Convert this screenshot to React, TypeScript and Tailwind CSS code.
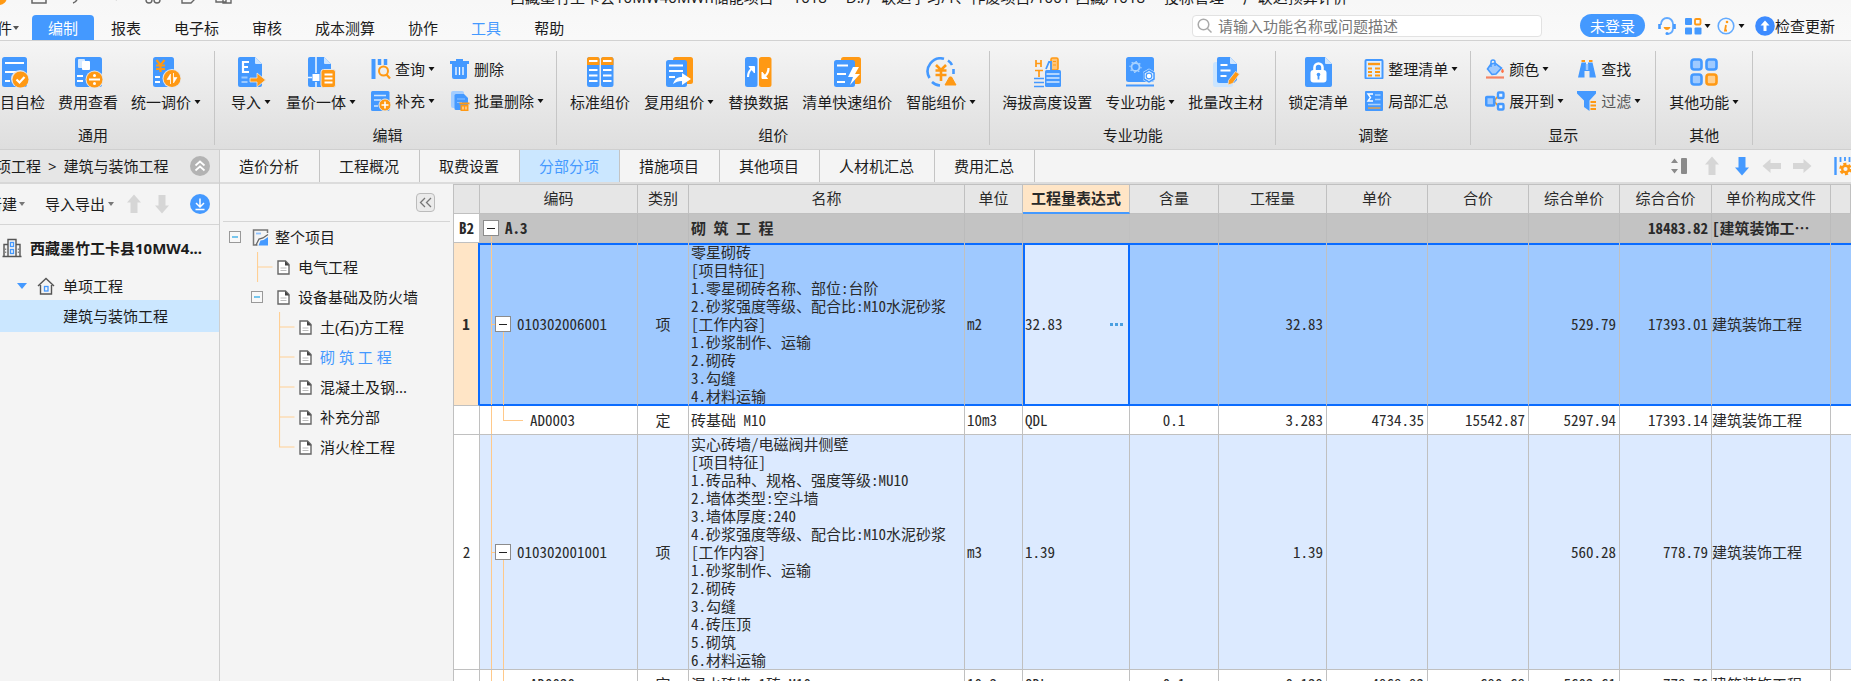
import type { ReactNode } from "react";

const BLUE = "#4499ff";
const ORANGE = "#ff9914";

function Svg({ w, h, children }: { w: number; h: number; children: ReactNode }) {
  return (
    <svg width={w} height={h} viewBox={`0 0 ${w} ${h}`} className="shrink-0" fill="none" aria-hidden="true">
      {children}
    </svg>
  );
}

function Caret() {
  return <Svg w={7} h={4}><path d="M0.5 0h6L3.5 4z" fill="#111" /></Svg>;
}

/* ---------- large ribbon icons, 30px high ---------- */

const CheckDoc = () => (
  <Svg w={28} h={31}>
    <rect x="1" y="0" width="25" height="30" rx="2.5" fill={BLUE} />
    <path d="M4 6h19M4 15h13M4 24h5" stroke="#fff" strokeWidth="2" />
    <circle cx="19" cy="22" r="9" fill="#e6e6e6" />
    <circle cx="19.500" cy="22.500" r="8" fill={ORANGE} />
    <path d="M15.500 22.500l3 3 5-5.500" stroke="#fff" strokeWidth="2.200" />
  </Svg>
);

const FeeDoc = () => (
  <Svg w={29} h={31}>
    <rect x="1" y="0" width="27" height="30" rx="2.500" fill={BLUE} />
    <rect x="4" y="2" width="7" height="9" rx="1" fill="#d5e9ff" />
    <rect x="8" y="4" width="8" height="9" rx="1" fill="#fff" />
    <path d="M3 19h6M3 24h6" stroke="#fff" strokeWidth="2.200" />
    <circle cx="20.500" cy="22.500" r="9" fill="#e6e6e6" />
    <circle cx="20.500" cy="22.500" r="8" fill={ORANGE} />
    <path d="M15 22.500h11" stroke="#fff" strokeWidth="2" />
    <circle cx="20.500" cy="18.500" r="1.500" fill="#fff" />
    <circle cx="20.500" cy="26.500" r="1.500" fill="#fff" />
  </Svg>
);

const YuanDoc = () => (
  <Svg w={29} h={31}>
    <rect x="1" y="0" width="21" height="30" rx="2.500" fill={BLUE} />
    <path d="M4.500 3l4 5 4-5M8.500 8v7M4 8.500h9M4 12h9" stroke={ORANGE} strokeWidth="2.200" />
    <path d="M3 20h5M3 25h5" stroke="#fff" strokeWidth="2" />
    <circle cx="20" cy="21.500" r="9.500" fill="#e6e6e6" />
    <circle cx="20" cy="21.500" r="8.500" fill={ORANGE} />
    <path d="M18.500 27V17l-3.500 5.500h3.500zM21.500 16v10l3.500-5.500h-3.500z" fill="#fff" stroke="#fff" strokeWidth=".6" />
  </Svg>
);

const ImportDoc = () => (
  <Svg w={29} h={31}>
    <path d="M3 0h15l7 7v21a2 2 0 0 1-2 2H3a2 2 0 0 1-2-2V2a2 2 0 0 1 2-2z" fill={BLUE} />
    <path d="M18 0l7 7h-6a1 1 0 0 1-1-1z" fill="#cfe6ff" />
    <path d="M12 5H6v10h6M6 10h5" stroke="#fff" strokeWidth="2.200" />
    <path d="M4.500 20.500h6M4.500 25h6" stroke="#9ccaff" strokeWidth="2" />
    <path d="M13 21h7v-5l8.500 7L20 30v-5h-7z" fill={ORANGE} stroke="#e6e6e6" strokeWidth=".8" />
  </Svg>
);

const PriceBody = () => (
  <Svg w={29} h={31}>
    <path d="M3 0h14l7 7v23H3a2 2 0 0 1-2-2V2a2 2 0 0 1 2-2z" fill={BLUE} />
    <path d="M17 0l7 7h-6a1 1 0 0 1-1-1z" fill="#cfe6ff" />
    <path d="M9 0v16M9 25v5M1 20.500h4" stroke="#e8f3ff" strokeWidth="1.600" />
    <rect x="5.500" y="17" width="7" height="7" fill="#fff" />
    <rect x="14" y="12.500" width="14.500" height="18" rx="2.500" fill={ORANGE} stroke="#e6e6e6" />
    <path d="M17.500 17.500h8M17.500 21.500h8M17.500 25.500h8" stroke="#fff" strokeWidth="1.800" />
  </Svg>
);

const StandardIcon = () => (
  <Svg w={28} h={31}>
    {[1, 15].map((x) => (
      <g key={x}>
        <rect x={x} y="0" width="12.500" height="30" rx="2.500" fill={BLUE} />
        <path d={`M${x} 8V2.500a2.500 2.500 0 0 1 2.500-2.500h7.500a2.500 2.500 0 0 1 2.500 2.500V8z`} fill={ORANGE} />
        <path d={`M${x + 2} 4h8.500M${x + 2} 13h8.500M${x + 2} 18.500h8.500M${x + 2} 24h8.500`} stroke="#fff" strokeWidth="2" />
      </g>
    ))}
  </Svg>
);

const ReuseIcon = () => (
  <Svg w={29} h={31}>
    <rect x="8" y="0" width="20" height="27" rx="2.500" fill={ORANGE} />
    <rect x="1" y="3" width="21" height="27" rx="2.500" fill={BLUE} />
    <path d="M4 8.500h14M4 14h14M4 20h6" stroke="#fff" strokeWidth="2" />
    <path d="M8 27c2-6 5-7 9-7v-4l9 6-9 6v-4c-4 0-6 1-9 3z" fill="#fff" />
  </Svg>
);

const ReplaceIcon = () => (
  <Svg w={28} h={31}>
    <rect x="1" y="0" width="12.500" height="30" rx="2.500" fill={BLUE} />
    <rect x="15" y="0" width="12.500" height="30" rx="2.500" fill={ORANGE} />
    <path d="M4 20c0-4 1-6 3.500-8" stroke="#fff" strokeWidth="2.200" />
    <path d="M5 9.500h5.500V16z" fill="#fff" stroke="#fff" />
    <path d="M24.500 11c0 4-1 6-3.500 8" stroke="#fff" strokeWidth="2.200" />
    <path d="M23.500 21.500H18V15z" fill="#fff" stroke="#fff" />
  </Svg>
);

const QuickIcon = () => (
  <Svg w={29} h={31}>
    <rect x="8" y="0" width="20" height="27" rx="2.500" fill={ORANGE} />
    <rect x="1" y="3" width="21" height="27" rx="2.500" fill={BLUE} />
    <path d="M4 8.500h11M4 17h9M4 25h8" stroke="#fff" strokeWidth="2" />
    <path d="M20 10l-5 10h5l-3 8 10-11h-5l4-7z" fill="#fff" />
  </Svg>
);

const SmartIcon = () => (
  <Svg w={31} h={31}>
    <path d="M18 1.800A13 13 0 0 0 3.500 21M6 25A13 13 0 0 0 14 28.500" stroke={BLUE} strokeWidth="2.600" />
    <path d="M22 3.500A13 13 0 0 1 26 8M27.500 12v5" stroke={BLUE} strokeWidth="2.600" />
    <path d="M10 8l5 5 5-5M15 13v11M9.500 13.500h11M9.500 18h11" stroke={ORANGE} strokeWidth="2.600" />
    <path d="M19 28l4.500-8h2l4.500 8z" fill={ORANGE} stroke={ORANGE} strokeLinejoin="round" />
  </Svg>
);

const AltitudeIcon = () => (
  <Svg w={29} h={31}>
    <path d="M3 3v7M8 3v7M3 6.500h5M2 13.500h8M6 13.500V20" stroke={ORANGE} strokeWidth="1.700" />
    <rect x="18" y="1" width="7" height="12" rx="1.500" fill="#ffc478" stroke={ORANGE} strokeWidth="1.600" />
    <path d="M20 4.500h3M20 8h3" stroke={ORANGE} strokeWidth="1.200" />
    <path d="M13 12l3-7h2v8" stroke={BLUE} strokeWidth="1.800" />
    <rect x="12" y="13" width="16" height="17" rx="1.500" fill={BLUE} />
    <path d="M13.500 17h13M13.500 21h13M13.500 25h13" stroke="#d5e9ff" strokeWidth="1.400" />
    <path d="M1 21.500h10M1 25.500h10M1 29.500h10" stroke={BLUE} strokeWidth="1.600" />
  </Svg>
);

const ProIcon = () => (
  <Svg w={30} h={31}>
    <rect x="1" y="0" width="28" height="25" rx="2.500" fill={BLUE} />
    <circle cx="10.500" cy="10" r="4" stroke="#a8d2ff" strokeWidth="1.800" />
    <circle cx="10.500" cy="10" r="5.500" stroke="#a8d2ff" strokeWidth="1.200" strokeDasharray="1.500 2.700" />
    <path d="M24 11.500l6 3.500v8l-6 3.500-6-3.500v-8z" fill="#cfe6ff" />
    <path d="M24 13l5 3v6l-5 3-5-3v-6z" fill="#eaf4ff" stroke={BLUE} strokeWidth="1.500" />
    <circle cx="24" cy="19" r="2.800" fill="#fff" stroke={BLUE} strokeWidth="1.200" />
    <path d="M1 28.500h28" stroke={BLUE} strokeWidth="2" />
  </Svg>
);

const EditMaterialIcon = () => (
  <Svg w={28} h={31}>
    <rect x="1" y="5" width="20" height="25" rx="2.500" fill="#cbe5ff" />
    <path d="M7 0h11l7 7v16l-3 3H7a2 2 0 0 1-2-2V2a2 2 0 0 1 2-2z" fill={BLUE} />
    <path d="M18 0l7 7h-6a1 1 0 0 1-1-1z" fill="#cfe6ff" />
    <path d="M8.500 8h7M8.500 13.500h10M8.500 19h6" stroke="#fff" strokeWidth="2" />
    <path d="M23.500 14.500l4 2.500-7 9.500-4.500 1.500.5-4.500z" fill={ORANGE} stroke="#e6e6e6" strokeWidth=".8" />
  </Svg>
);

const LockIcon = () => (
  <Svg w={29} h={31}>
    <path d="M3 0h18l7 7v21a2 2 0 0 1-2 2H3a2 2 0 0 1-2-2V2a2 2 0 0 1 2-2z" fill={BLUE} />
    <path d="M21 0l7 7h-6a1 1 0 0 1-1-1z" fill="#cfe6ff" />
    <path d="M10.500 14v-3.500a4 4 0 0 1 8 0V14" stroke="#fff" strokeWidth="2.600" />
    <rect x="6.500" y="13" width="16" height="12.500" rx="3" fill="#fff" />
    <path d="M14.500 18v4.500" stroke={BLUE} strokeWidth="1.800" />
    <circle cx="14.500" cy="17.500" r="1.800" fill={BLUE} />
  </Svg>
);

const OtherIcon = () => (
  <Svg w={30} h={31}>
    {[[2, 2, BLUE, "#9fcaff"], [17, 2, BLUE, "#9fcaff"], [2, 17, BLUE, "#9fcaff"], [17, 17, ORANGE, "#ffcf8f"]].map(([x, y, c, f]) => (
      <rect key={`${x}-${y}`} x={+x + 0.5} y={+y + 0.5} width="10" height="10" rx="2.500" fill={String(f)} stroke={String(c)} strokeWidth="2.600" />
    ))}
  </Svg>
);

/* ---------- small ribbon icons, 20px ---------- */

const QueryIcon = () => (
  <Svg w={20} h={20}>
    <path d="M2.500 0v20" stroke={BLUE} strokeWidth="4" />
    <path d="M8.500 0v6M14.500 0v6" stroke={BLUE} strokeWidth="3.500" />
    <circle cx="12.500" cy="12" r="4.500" stroke={ORANGE} strokeWidth="2" />
    <path d="M15.500 15.500l3.500 4" stroke={ORANGE} strokeWidth="2.200" />
  </Svg>
);

const SupplementIcon = () => (
  <Svg w={20} h={20}>
    <rect x="0" y="0" width="18.500" height="20" rx="1.500" fill={BLUE} />
    <path d="M3 4.500h12M3 9h7M3 15h4" stroke="#cfe6ff" strokeWidth="1.500" />
    <circle cx="14" cy="14" r="6" fill={ORANGE} stroke="#e6e6e6" />
    <path d="M10.500 14h7M14 10.500v7" stroke="#fff" strokeWidth="1.600" />
  </Svg>
);

const TrashIcon = () => (
  <Svg w={20} h={20}>
    <path d="M6 0h7v2h6v3H0V2h6zM2 5h15v13a2 2 0 0 1-2 2H4a2 2 0 0 1-2-2z" fill={BLUE} />
    <path d="M6 8v8M9.500 8v8M13 8v8" stroke="#fff" strokeWidth="1.300" />
  </Svg>
);

const BatchTrashIcon = () => (
  <Svg w={20} h={20}>
    <rect x="1" y="0" width="13" height="17" rx="2" fill="#a3cdff" />
    <path d="M6 3h8l4 4v12H6a1.500 1.500 0 0 1-1.500-1.500v-13A1.500 1.500 0 0 1 6 3z" fill={BLUE} />
    <path d="M7 8h8M7 11.500h5" stroke="#8ec2ff" strokeWidth="1.200" />
    <path d="M9.500 11.500h10v2h-10zM10.500 14h8v6h-8z" fill={ORANGE} />
    <path d="M13 15.500v3M16 15.500v3" stroke="#ffe2ba" strokeWidth="1.200" />
  </Svg>
);

const ArrangeIcon = () => (
  <Svg w={20} h={20}>
    <rect x="1.500" y="1" width="17" height="18.500" rx="1" fill="#e1f0ff" stroke={BLUE} strokeWidth="2" />
    <path d="M4 5h12" stroke={ORANGE} strokeWidth="2.400" />
    <path d="M4 9.500h4M4 13h4M4 16.500h4M11 9.500h5M11 13h5M11 16.500h5" stroke={ORANGE} strokeWidth="1.800" />
  </Svg>
);

const PartialIcon = () => (
  <Svg w={20} h={20}>
    <rect x="1" y="0" width="18" height="20" rx="1" fill={BLUE} />
    <path d="M9 3H4l2.500 3.500L4 10h5" stroke="#fff" strokeWidth="1.400" />
    <path d="M11 4h5.500M11 8.500h5.500M4 13.500h12.500" stroke="#a8d2ff" strokeWidth="1.600" />
    <path d="M4 17h12.500" stroke="#d8a25c" strokeWidth="1.600" />
  </Svg>
);

const PaintIcon = () => (
  <Svg w={20} h={20}>
    <path d="M6 5l4-1 6.500 5-5.500 6-4 .5L2.500 10z" fill="#9fcaff" stroke={BLUE} strokeWidth="1.600" />
    <path d="M6 8V3a2 2 0 0 1 4 0v4" stroke={BLUE} strokeWidth="1.500" />
    <path d="M17.500 10c1 1.800 1.300 3.500 0 3.500s-1-1.700 0-3.500z" fill="#ff7043" stroke="#ff7043" />
    <path d="M1 18.500h18" stroke="#f58464" strokeWidth="2.200" />
  </Svg>
);

const ExpandIcon = () => (
  <Svg w={20} h={20}>
    <path d="M9 10l5-6M9 10l5 6" stroke={ORANGE} strokeWidth="1.500" />
    <rect x="1.200" y="6" width="8" height="8.500" rx="1" fill="#9fcaff" stroke={BLUE} strokeWidth="2.600" />
    <rect x="13" y="1.500" width="5.500" height="5.500" rx="1" fill="#e9f4ff" stroke={BLUE} strokeWidth="2.400" />
    <rect x="13" y="13" width="5.500" height="5.500" rx="1" fill="#e9f4ff" stroke={BLUE} strokeWidth="2.400" />
  </Svg>
);

const FindIcon = () => (
  <Svg w={20} h={20}>
    <path d="M4.500 2h3.500M12 2h3.500" stroke={ORANGE} strokeWidth="2" />
    <path d="M4.500 3.500H9V5h2V3.500h4.500L19 18.500h-6.500V12h-5v6.500H1z" fill={BLUE} />
    <path d="M10 5v6" stroke="#9fcaff" strokeWidth="2.500" />
  </Svg>
);

const FilterIcon = () => (
  <Svg w={20} h={20}>
    <path d="M0 0h19v2.500l-6.500 7V20L7 16V9.500L0 2.500z" fill={BLUE} />
    <path d="M13.500 11h5.500M13.500 14.500h5.500M13.500 18h5.500" stroke={ORANGE} strokeWidth="1.800" />
  </Svg>
);

/* ---------- ribbon ---------- */

interface Tool {
  label: string;
  icon: ReactNode;
  caret?: boolean;
  muted?: boolean;
}

function BigTool({ label, icon, caret }: Tool) {
  return (
    <button type="button" className="flex flex-col items-center gap-1 whitespace-nowrap">
      {icon}
      <span className="flex items-center gap-[3px] leading-5">{label}{caret && <Caret />}</span>
    </button>
  );
}

function SmallTools({ tools }: { tools: Tool[] }) {
  return (
    <div className="flex flex-col gap-3 pt-0.5">
      {tools.map((t) => (
        <button key={t.label} type="button" className="flex items-center gap-1 whitespace-nowrap leading-5">
          {t.icon}
          <span className={`flex items-center gap-[3px] ${t.muted ? "text-[#555]" : ""}`}>{t.label}{t.caret && <Caret />}</span>
        </button>
      ))}
    </div>
  );
}

function Group({ title, pad = "px-[13px]", gap = "gap-[13px]", children }: { title: string; pad?: string; gap?: string; children: ReactNode }) {
  return (
    <section aria-label={title} className={`flex shrink-0 flex-col items-center justify-between border-r border-[#c6c6c6] ${pad}`}>
      <div className={`flex items-start pt-1.5 ${gap}`}>{children}</div>
      <span className="leading-5">{title}</span>
    </section>
  );
}

function Ribbon() {
  return (
    <div className="flex border-b border-[#cfcfcf] bg-linear-to-b from-[#f5f5f5] to-[#dedede] py-1">
      <div className="-ml-7 flex h-[100px] pt-1.5">
        <Group title="通用">
          <BigTool label="项目自检" icon={<CheckDoc />} />
          <BigTool label="费用查看" icon={<FeeDoc />} />
          <BigTool label="统一调价" icon={<YuanDoc />} caret />
        </Group>
        <Group title="编辑" pad="pl-4 pr-3" gap="gap-[15px]">
          <BigTool label="导入" icon={<ImportDoc />} caret />
          <BigTool label="量价一体" icon={<PriceBody />} caret />
          <SmallTools tools={[{ label: "查询", icon: <QueryIcon />, caret: true }, { label: "补充", icon: <SupplementIcon />, caret: true }]} />
          <SmallTools tools={[{ label: "删除", icon: <TrashIcon /> }, { label: "批量删除", icon: <BatchTrashIcon />, caret: true }]} />
        </Group>
        <Group title="组价" gap="gap-3.5">
          <BigTool label="标准组价" icon={<StandardIcon />} />
          <BigTool label="复用组价" icon={<ReuseIcon />} caret />
          <BigTool label="替换数据" icon={<ReplaceIcon />} />
          <BigTool label="清单快速组价" icon={<QuickIcon />} />
          <BigTool label="智能组价" icon={<SmartIcon />} caret />
        </Group>
        <Group title="专业功能" pad="px-3">
          <BigTool label="海拔高度设置" icon={<AltitudeIcon />} />
          <BigTool label="专业功能" icon={<ProIcon />} caret />
          <BigTool label="批量改主材" icon={<EditMaterialIcon />} />
        </Group>
        <Group title="调整" pad="px-3" gap="gap-4">
          <BigTool label="锁定清单" icon={<LockIcon />} />
          <SmallTools tools={[{ label: "整理清单", icon: <ArrangeIcon />, caret: true }, { label: "局部汇总", icon: <PartialIcon /> }]} />
        </Group>
        <Group title="显示" pad="px-3.5">
          <SmallTools tools={[{ label: "颜色", icon: <PaintIcon />, caret: true }, { label: "展开到", icon: <ExpandIcon />, caret: true }]} />
          <SmallTools tools={[{ label: "查找", icon: <FindIcon /> }, { label: "过滤", icon: <FilterIcon />, caret: true, muted: true }]} />
        </Group>
        <Group title="其他">
          <BigTool label="其他功能" icon={<OtherIcon />} caret />
        </Group>
      </div>
    </div>
  );
}

/* ---------- title bar and menu ---------- */

const TITLE = ["西藏墨竹工卡县10MW40MWh储能项目", "1018", "D:/广联达学习/1、作废项目/1001-西藏/1018", "投标管理", "广联达预算计价"];

function TitleBar() {
  return (
    <div className="-mt-3.5 flex h-[22px] items-center">
      <div className="flex w-[510px] shrink-0 items-end gap-5 pb-px text-[#666]">
        <Svg w={9} h={22}><circle cx="-1" cy="11" r="8" fill={ORANGE} /></Svg>
        <Svg w={20} h={22}><path d="M3 4h14v13H3z" stroke="#666" strokeWidth="1.500" /></Svg>
        <Svg w={14} h={22}><path d="M4 17c4-1 5-5 5-9" stroke="#666" strokeWidth="1.500" /></Svg>
        <Svg w={22} h={22}><path d="M14 14c-3-1-3-5 0-8" stroke="#ccc" strokeWidth="1.500" /></Svg>
        <Svg w={16} h={22}>
          <circle cx="4" cy="14" r="3" stroke="#666" strokeWidth="1.400" />
          <circle cx="12" cy="14" r="3" stroke="#666" strokeWidth="1.400" />
        </Svg>
        <Svg w={14} h={22}><path d="M1 5h12v9l-3 3H1z" stroke="#666" strokeWidth="1.400" /></Svg>
        <Svg w={18} h={22}><path d="M1 4h10v12H1zM8 9h8v8H8z" stroke="#666" strokeWidth="1.400" /></Svg>
      </div>
      <p className="flex whitespace-nowrap">
        {TITLE.map((part, i) => (
          <span key={part}>{i > 0 && <span className="mx-[7px]">-</span>}{part}</span>
        ))}
      </p>
    </div>
  );
}

const MENUS = ["报表", "电子标", "审核", "成本测算", "协作", "工具", "帮助"];

function MenuBar() {
  return (
    <div className="flex h-[33px] items-end justify-between border-b border-[#d2d2d2] pr-4">
      <nav className="-ml-[18px] flex items-end gap-px">
        <button type="button" className="mr-3 flex h-[25px] items-center gap-px whitespace-nowrap">
          文件
          <Svg w={6} h={4}><path d="M0 0h6L3 4z" fill="#555" /></Svg>
        </button>
        <button type="button" className="h-[25px] whitespace-nowrap rounded-t bg-[#4499ff] px-4 text-white">编制</button>
        {MENUS.map((m) => (
          <button key={m} type="button" className={`h-[25px] whitespace-nowrap px-4 ${m === "工具" ? "text-[#4499ff]" : ""}`}>{m}</button>
        ))}
      </nav>
      <div className="flex items-center pb-[3px]">
        <label className="mr-[38px] flex h-[22px] w-[350px] items-center gap-1.5 rounded border border-[#e2e2e2] bg-white pl-1">
          <Svg w={15} h={15}>
            <circle cx="6.500" cy="6.500" r="5.300" stroke="#aaa" strokeWidth="1.500" />
            <path d="M10.500 10.500l4 4" stroke="#aaa" strokeWidth="1.500" />
          </Svg>
          <input type="text" aria-label="搜索" placeholder="请输入功能名称或问题描述" className="w-full bg-transparent outline-none placeholder:text-[#777]" />
        </label>
        <button type="button" className="mr-3 h-[23px] w-[65px] rounded-full bg-[#4499ff] text-white">未登录</button>
        <button type="button" aria-label="客服" className="mr-[7px]">
          <Svg w={20} h={20}>
            <path d="M4 9V8a6 6 0 0 1 12 0v4c0 4-2 5.500-5 6" stroke="#62aaff" strokeWidth="1.800" />
            <path d="M2.500 8v5M17.500 8v5" stroke={BLUE} strokeWidth="2.600" />
            <path d="M7 11.500c1 2.500 5 2.500 6 0z" fill={ORANGE} stroke={ORANGE} />
            <circle cx="10" cy="17.500" r="1.500" fill={BLUE} />
          </Svg>
        </button>
        <button type="button" aria-label="应用" className="mr-1.5 flex items-center gap-0.5">
          <Svg w={18} h={18}>
            <rect x="1" y="1" width="7" height="7" rx="1" fill={BLUE} />
            <rect x="11" y="2" width="5.500" height="5.500" rx="1" stroke={ORANGE} strokeWidth="1.800" />
            <rect x="1" y="10.500" width="7" height="7" rx="1" fill={BLUE} />
            <rect x="10.500" y="10.500" width="7" height="7" rx="1" fill={BLUE} />
          </Svg>
          <Caret />
        </button>
        <button type="button" aria-label="关于" className="mr-2.5 flex items-center gap-[3px]">
          <Svg w={18} h={18}>
            <circle cx="9" cy="9" r="7.800" stroke="#62aaff" strokeWidth="1.600" />
            <path d="M9 8l-1 5.500h2" stroke={ORANGE} strokeWidth="1.800" />
            <circle cx="10" cy="5" r="1.300" fill={ORANGE} />
          </Svg>
          <Caret />
        </button>
        <button type="button" className="flex items-center whitespace-nowrap">
          <Svg w={20} h={20}>
            <circle cx="10" cy="10" r="9.800" fill="#3d8bff" />
            <path d="M10 4.500l4.500 5h-3V15h-3V9.500h-3z" fill="#fff" />
          </Svg>
          检查更新
        </button>
      </div>
    </div>
  );
}

/* ---------- project panel ---------- */

function Arrow({ dir, color }: { dir: "up" | "down" | "left" | "right"; color: string }) {
  const paths = {
    up: "M10 0.500l7 8h-3.500V19h-7V8.500H3z",
    down: "M10 19.500l7-8h-3.500V1h-7v10.500H3z",
    left: "M0.500 10l8-7v4H19v6H8.500v4z",
    right: "M19.500 10l-8-7v4H1v6h10.500v4z",
  };
  return <Svg w={20} h={20}><path d={paths[dir]} fill={color} /></Svg>;
}

function ProjectPanel() {
  return (
    <aside className="w-[220px] shrink-0 overflow-hidden border-r border-[#cfcfcf]">
      <div className="flex h-[34px] items-center justify-between border-b-2 border-[#d8d8d8] bg-[#e6e6e6] pr-[9px]">
        <span className="-ml-[19px] flex gap-[7px] whitespace-nowrap"><span>单项工程</span><span>&gt;</span><span>建筑与装饰工程</span></span>
        <button type="button" aria-label="收起">
          <Svg w={20} h={20}>
            <circle cx="10" cy="10" r="10" fill="#b3b3b3" />
            <path d="M5.500 9.500L10 5.500l4.500 4M5.500 14.500l4.500-4 4.500 4" stroke="#fff" strokeWidth="1.700" />
          </Svg>
        </button>
      </div>
      <div className="flex h-[41px] items-center border-b border-[#d5d5d5] pr-[9px]">
        <button type="button" className="-ml-[13px] mr-5 flex items-center gap-0.5 whitespace-nowrap">新建<Svg w={6} h={4}><path d="M0 0h6L3 4z" fill="#777" /></Svg></button>
        <button type="button" className="mr-2.5 flex items-center gap-[3px] whitespace-nowrap">导入导出<Svg w={6} h={4}><path d="M0 0h6L3 4z" fill="#777" /></Svg></button>
        <button type="button" aria-label="上移" className="mr-2"><Arrow dir="up" color="#d6d6d6" /></button>
        <button type="button" aria-label="下移"><Arrow dir="down" color="#d6d6d6" /></button>
        <button type="button" aria-label="下载" className="ml-auto">
          <Svg w={20} h={20}>
            <circle cx="10" cy="10" r="10" fill={BLUE} />
            <path d="M10 4.500v8M6 9l4 4 4-4M5.500 15.500h9" stroke="#fff" strokeWidth="1.500" />
          </Svg>
        </button>
      </div>
      <ul>
        <li className="flex h-[46px] items-center gap-2 pl-0.5 font-bold">
          <Svg w={20} h={20}>
            <path d="M6 18.500V1.500h8v17M6 6.500H2v12M14 6.500h4v12M0.500 18.500h19" stroke="#555" strokeWidth="1.400" />
            <path d="M3.500 10.500v6M16.500 10.500v6" stroke="#888" strokeDasharray="1.500 1.500" strokeWidth="1.500" />
            <rect x="8.500" y="4.500" width="3" height="4" stroke={BLUE} strokeWidth="1.300" />
            <rect x="8.500" y="11.500" width="3" height="4" stroke={BLUE} strokeWidth="1.300" />
          </Svg>
          <span className="whitespace-nowrap">西藏墨竹工卡县10MW4...</span>
        </li>
        <li className="flex h-[29px] items-center pl-[17px]">
          <Svg w={10} h={6}><path d="M0 0h10L5 6z" fill={BLUE} /></Svg>
          <span className="ml-2.5 mr-2">
            <Svg w={18} h={18}>
              <path d="M1 9l8-7.500L17 9M3.500 8v9h11V8" stroke="#555" strokeWidth="1.400" />
              <rect x="7.500" y="9.500" width="3.500" height="4.500" stroke={BLUE} strokeWidth="1.300" />
            </Svg>
          </span>
          单项工程
        </li>
        <li className="flex h-8 items-center bg-[#cbe7ff] pl-[63px]">建筑与装饰工程</li>
      </ul>
    </aside>
  );
}

/* ---------- section tree ---------- */

interface TreeNode {
  label: string;
  level: number;
  open?: boolean;
  active?: boolean;
  last?: boolean;
}

const TREE: TreeNode[] = [
  { label: "电气工程", level: 1 },
  { label: "设备基础及防火墙", level: 1, open: true },
  { label: "土(石)方工程", level: 2 },
  { label: "砌 筑 工 程", level: 2, active: true },
  { label: "混凝土及钢...", level: 2 },
  { label: "补充分部", level: 2 },
  { label: "消火栓工程", level: 2, last: true },
];

const MinusBox = () => (
  <Svg w={12} h={12}>
    <rect x=".5" y=".5" width="11" height="11" fill="#f8f8f8" stroke="#999" />
    <path d="M3 6h6" stroke="#3fb0e8" strokeWidth="1.400" />
  </Svg>
);

function Branch({ last }: { last?: boolean }) {
  return (
    <Svg w={16} h={30}>
      <path d={last ? "M0.500 0v15h15" : "M0.500 0v30M0.500 15h15"} stroke="#ffcf94" strokeWidth="1.200" />
    </Svg>
  );
}

function SectionTree() {
  return (
    <div className="w-[233px] shrink-0 px-[3px]">
      <div className="flex h-[38px] items-center justify-end border-b border-[#d5d5d5] pr-[15px]">
        <button type="button" aria-label="收起目录" className="flex size-[19px] items-center justify-center rounded border border-[#bbb] bg-[#ebebeb]">
          <Svg w={13} h={11}><path d="M6 1L1.500 5.500 6 10M12 1L7.500 5.500 12 10" stroke="#777" strokeWidth="1.300" /></Svg>
        </button>
      </div>
      <ul>
        <li className="flex h-[30px] items-center pl-1.5">
          <MinusBox />
          <span className="ml-[11px] mr-1.5">
            <Svg w={17} h={17}>
              <path d="M15.500 4V1h-14v15h4" stroke="#777" strokeWidth="1.500" />
              <path d="M4 4.500h5" stroke="#8ec2ff" strokeWidth="1.800" />
              <path d="M4 16l3-6 4-1 5-3.500" stroke="#666" strokeWidth="1.300" />
              <path d="M6.500 16.500l2-5 3-.5 4.500-3v8.500z" fill={BLUE} />
            </Svg>
          </span>
          整个项目
        </li>
        {TREE.map((n) => (
          <li key={n.label} className={`flex h-[30px] items-center whitespace-nowrap ${n.level === 1 ? (n.open ? "pl-7" : "pl-[34px]") : "pl-14"} ${n.active ? "text-[#4499ff]" : ""}`}>
            {n.open ? <span className="mr-2.5"><MinusBox /></span> : <Branch last={n.last} />}
            <span className="ml-1 mr-2">
              <Svg w={13} h={15}>
                <path d="M1 1h7.500L12 4.500V14H1z" fill="#fff" stroke="#666" strokeWidth="1.400" />
                <path d="M8 1l4.500 4.500H8z" fill="#444" />
                <path d="M3.500 8h6M3.500 10.500h6" stroke="#bbb" />
              </Svg>
            </span>
            {n.label}
          </li>
        ))}
      </ul>
    </div>
  );
}

/* ---------- bill table ---------- */

const COLUMNS: [string, string][] = [
  ["", "w-[26px]"],
  ["编码", "w-[158px]"],
  ["类别", "w-[51px]"],
  ["名称", "w-[276px]"],
  ["单位", "w-[58px]"],
  ["工程量表达式", "w-[107px]"],
  ["含量", "w-[89px]"],
  ["工程量", "w-[108px]"],
  ["单价", "w-[101px]"],
  ["合价", "w-[101px]"],
  ["综合单价", "w-[91px]"],
  ["综合合价", "w-[92px]"],
  ["单价构成文件", "w-[119px]"],
  [" ", ""],
];

interface Row {
  no: string;
  kind: "group" | "item" | "quota";
  code: string;
  type: string;
  name: string[];
  unit: string;
  expr: string;
  ratio: string;
  qty: string;
  price: string;
  total: string;
  unitAll: string;
  totalAll: string;
  file: string;
  selected?: boolean;
  open?: boolean;
}

const ROWS: Row[] = [
  { no: "B2", kind: "group", code: "A.3", type: "", name: ["砌 筑 工 程"], unit: "", expr: "", ratio: "", qty: "", price: "", total: "", unitAll: "", totalAll: "18483.82", file: "[建筑装饰工…" },
  {
    no: "1", kind: "item", code: "010302006001", type: "项", selected: true,
    name: ["零星砌砖", "[项目特征]", "1.零星砌砖名称、部位:台阶", "2.砂浆强度等级、配合比:M10水泥砂浆", "[工作内容]", "1.砂浆制作、运输", "2.砌砖", "3.勾缝", "4.材料运输"],
    unit: "m2", expr: "32.83", ratio: "", qty: "32.83", price: "", total: "", unitAll: "529.79", totalAll: "17393.01", file: "建筑装饰工程",
  },
  { no: "", kind: "quota", code: "AD0003", type: "定", name: ["砖基础 M10"], unit: "10m3", expr: "QDL", ratio: "0.1", qty: "3.283", price: "4734.35", total: "15542.87", unitAll: "5297.94", totalAll: "17393.14", file: "建筑装饰工程" },
  {
    no: "2", kind: "item", code: "010302001001", type: "项",
    name: ["实心砖墙/电磁阀井侧壁", "[项目特征]", "1.砖品种、规格、强度等级:MU10", "2.墙体类型:空斗墙", "3.墙体厚度:240", "4.砂浆强度等级、配合比:M10水泥砂浆", "[工作内容]", "1.砂浆制作、运输", "2.砌砖", "3.勾缝", "4.砖压顶", "5.砌筑", "6.材料运输"],
    unit: "m3", expr: "1.39", ratio: "", qty: "1.39", price: "", total: "", unitAll: "560.28", totalAll: "778.79", file: "建筑装饰工程",
  },
  { no: "", kind: "quota", code: "AD0020", type: "定", name: ["混水砖墙 1砖 M10"], unit: "10m3", expr: "QDL", ratio: "0.1", qty: "0.139", price: "4968.92", total: "690.68", unitAll: "5602.61", totalAll: "778.76", file: "建筑装饰工程", open: true },
];

function TreeLines({ row }: { row: Row }) {
  const line = "absolute bg-[#ffc98a]";
  if (row.kind === "group") return <span className={`${line} bottom-0 left-[11px] h-1.5 w-px`} />;
  return (
    <>
      <span className={`${line} inset-y-0 left-[11px] w-px`} />
      {row.kind === "item" && <span className={`${line} left-[11px] top-1/2 h-px w-1`} />}
      {row.kind === "item" && <span className={`${line} bottom-0 left-[23px] top-1/2 w-px`} />}
      {row.kind === "quota" && <span className={`${line} left-[23px] top-0 w-px ${row.open ? "bottom-0" : "bottom-1/2"}`} />}
      {row.kind === "quota" && <span className={`${line} left-[23px] top-1/2 h-px w-5`} />}
    </>
  );
}

function Toggle() {
  return (
    <button type="button" aria-label="折叠" className="relative flex size-4 shrink-0 items-center justify-center border border-[#8c8c8c] bg-white">
      <span className="h-px w-2 bg-[#222]" />
    </button>
  );
}

function BillRow({ row }: { row: Row }) {
  const group = row.kind === "group";
  const tone = group ? "bg-[#c3c3c3] font-bold" : row.selected ? "bg-[#9fc9ff]" : row.kind === "item" ? "bg-[#dceaff]" : "bg-white";
  const height = row.selected ? "h-[163px]" : row.kind === "item" ? "h-[234px]" : "h-[29px]";
  // the selection frame is an inner shadow on top so that it adds no height
  const edge = row.selected ? "border-b border-b-[#0a6cff] shadow-[inset_0_2px_0_#0a6cff,inset_0_-1px_0_#0a6cff]" : "border-b";
  const cell = `border-r border-[#c0c0c0] ${group ? "border-r-[#bbb]" : ""} ${edge}`;
  const num = `${cell} pr-[3px] text-right`;
  const indent = group ? "pl-[3px]" : row.kind === "item" ? "pl-[15px]" : "pl-[50px]";
  return (
    <tr className={`${tone} ${height}`}>
      <th scope="row" className={`border-b border-[#c0c0c0] text-center ${row.selected ? "border-r-2 border-r-[#0a6cff] bg-[#ffe5c6] font-bold" : group ? "border-r bg-white font-bold" : "border-r bg-white font-normal"}`}>{row.no}</th>
      <td className={`relative ${cell}`}>
        <TreeLines row={row} />
        <span className={`flex items-center gap-1.5 ${indent}`}>
          {row.kind !== "quota" && <Toggle />}
          {row.code}
        </span>
      </td>
      <td className={`${cell} text-center`}>{row.type}</td>
      <td className={`${cell} whitespace-nowrap pl-0.5`}>
        {row.name.map((n) => <div key={n}>{n}</div>)}
      </td>
      <td className={`${cell} pl-0.5`}>{row.unit}</td>
      <td className={`${edge} ${row.selected ? "border-x-2 border-x-[#0a6cff] bg-[#dceaff]" : "border-r border-[#c0c0c0] pl-0.5"}`}>
        <span className="flex items-center justify-between pr-1">
          {row.expr}
          {row.selected && (
            <button type="button" aria-label="编辑表达式">
              <Svg w={14} h={3}><path d="M0 0h3v3H0zM5 0h3v3H5zM10 0h3v3h-3z" fill="#4a9fe0" /></Svg>
            </button>
          )}
        </span>
      </td>
      <td className={`${cell} text-center`}>{row.ratio}</td>
      <td className={num}>{row.qty}</td>
      <td className={num}>{row.price}</td>
      <td className={num}>{row.total}</td>
      <td className={num}>{row.unitAll}</td>
      <td className={num}>{row.totalAll}</td>
      <td className={`${cell} whitespace-nowrap`}>{row.file}</td>
      <td className={`border-[#c0c0c0] ${edge}`} />
    </tr>
  );
}

function BillTable() {
  return (
    <table className="w-full table-fixed border-separate border-spacing-0 border-l border-t border-[#c0c0c0] font-['Noto_Sans_Mono_CJK_SC','Noto_Sans_CJK_SC',monospace] leading-[18px] text-[#2a2a2a]">
      <thead>
        <tr className="h-[29px] bg-[#e6e6e6]">
          {COLUMNS.map(([label, width]) => (
            <th key={label} scope="col" className={`whitespace-nowrap border-r border-[#c0c0c0] pb-0.5 ${width} ${label === "工程量表达式" ? "border-b-2 border-b-[#4499ff] bg-[#ffe5c6] font-bold" : "border-b font-normal"}`}>{label}</th>
          ))}
        </tr>
      </thead>
      <tbody>
        {ROWS.map((r) => <BillRow key={r.code} row={r} />)}
      </tbody>
    </table>
  );
}

const TABS = ["造价分析", "工程概况", "取费设置", "分部分项", "措施项目", "其他项目", "人材机汇总", "费用汇总"];

function TabStrip() {
  return (
    <div className="flex h-[34px] items-center justify-between border-b-2 border-[#dcdcdc]">
      <div role="tablist" className="flex h-full">
        {TABS.map((t) => (
          <button key={t} type="button" role="tab" aria-selected={t === "分部分项"} className={`whitespace-nowrap border-r border-[#c4c4c4] pl-[19px] pr-5 ${t === "分部分项" ? "bg-[#cbe7ff] text-[#4499ff]" : ""}`}>{t}</button>
        ))}
      </div>
      <div className="flex items-center gap-2.5">
        <button type="button" aria-label="行高" className="mr-1">
          <Svg w={18} h={20}>
            <path d="M1 7l3.500-4.500L8 7zM1 13l3.500 4.500L8 13z" fill="#8a8a8a" />
            <rect x="11" y="2" width="6" height="16" rx="1" fill="#8a8a8a" />
          </Svg>
        </button>
        <button type="button" aria-label="上移"><Arrow dir="up" color="#d6d6d6" /></button>
        <button type="button" aria-label="下移"><Arrow dir="down" color={BLUE} /></button>
        <button type="button" aria-label="升级"><Arrow dir="left" color="#d6d6d6" /></button>
        <button type="button" aria-label="降级"><Arrow dir="right" color="#d6d6d6" /></button>
        <button type="button" aria-label="列设置" className="ml-3">
          <Svg w={17} h={20}>
            <path d="M1.500 1v18" stroke={BLUE} strokeWidth="2.400" />
            <path d="M6.500 1v5M11 1v4M15.500 1v5" stroke={BLUE} strokeWidth="1.800" />
            <circle cx="11.500" cy="13" r="5" stroke={ORANGE} strokeWidth="2.500" strokeDasharray="3 2.200" />
            <circle cx="11.500" cy="13" r="3.300" fill="#f4f4f4" stroke={ORANGE} strokeWidth="2.400" />
          </Svg>
        </button>
      </div>
    </div>
  );
}

export default function App() {
  return (
    <div className="flex h-screen flex-col overflow-hidden bg-[#f4f4f4] font-['Noto_Sans','Noto_Sans_CJK_SC',sans-serif] text-[15px] leading-5 text-[#1c1c1c]">
      <header className="shrink-0 bg-linear-to-b from-[#f7f7f7] to-white">
        <TitleBar />
        <MenuBar />
        <Ribbon />
      </header>
      <div className="flex min-h-0 flex-1">
        <ProjectPanel />
        <main className="flex min-w-0 flex-1 flex-col">
          <TabStrip />
          <div className="flex min-h-0 flex-1">
            <SectionTree />
            <div className="min-w-0 flex-1 overflow-hidden">
              <BillTable />
            </div>
          </div>
        </main>
      </div>
    </div>
  );
}
